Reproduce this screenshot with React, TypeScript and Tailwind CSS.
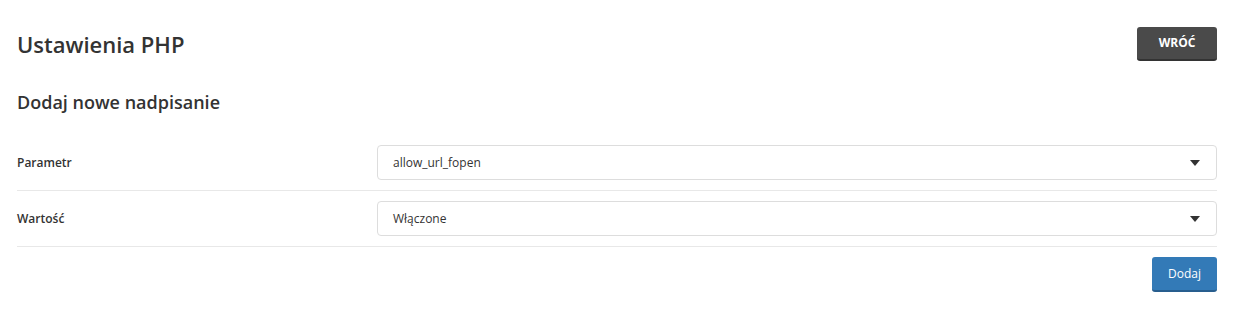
import React from "react";

function Caret() {
  return (
    <svg width="10" height="6" viewBox="0 0 10 6" className="shrink-0">
      <path d="M0 0 L10 0 L5 6 Z" fill="#333" />
    </svg>
  );
}

function SelectBox({ value }: { value: string }) {
  return (
    <div className="flex h-[35px] items-center justify-between rounded-[4px] border border-[#ddd] bg-white pl-[15px] pr-[16px] text-[12px] text-[#333]">
      <span>{value}</span>
      <Caret />
    </div>
  );
}

function Row({ label, value }: { label: string; value: string }) {
  return (
    <div className="flex items-center border-b border-[#e8e8e8] py-[10px]">
      <div className="w-[360px] shrink-0 text-[12px] font-semibold text-[#333]">{label}</div>
      <div className="flex-1">
        <SelectBox value={value} />
      </div>
    </div>
  );
}

export default function App() {
  return (
    <div
      className="min-h-[310px] bg-white pl-[17px] pr-[20px] pt-[27px]"
      style={{ fontFamily: "'Open Sans', 'Noto Sans', sans-serif" }}
    >
      <div className="flex items-center justify-between">
        <h1 className="text-[22px] font-semibold leading-[34px] text-[#333]">Ustawienia PHP</h1>
        <button className="h-[34px] w-[80px] rounded-[3px] border-b-2 border-[#333] bg-[#4a4a4a] text-[12px] font-bold text-white">
          WRÓĆ
        </button>
      </div>
      <h2 className="mt-[29px] text-[18px] font-semibold leading-[24px] text-[#333]">Dodaj nowe nadpisanie</h2>
      <div className="mt-[21px]">
        <Row label="Parametr" value="allow_url_fopen" />
        <Row label="Wartość" value="Włączone" />
      </div>
      <div className="mt-[10px] flex justify-end">
        <button className="h-[35px] w-[65px] rounded-[3px] border-b-2 border-[#285e8e] bg-[#337ab7] text-[12px] text-white">
          Dodaj
        </button>
      </div>
    </div>
  );
}
